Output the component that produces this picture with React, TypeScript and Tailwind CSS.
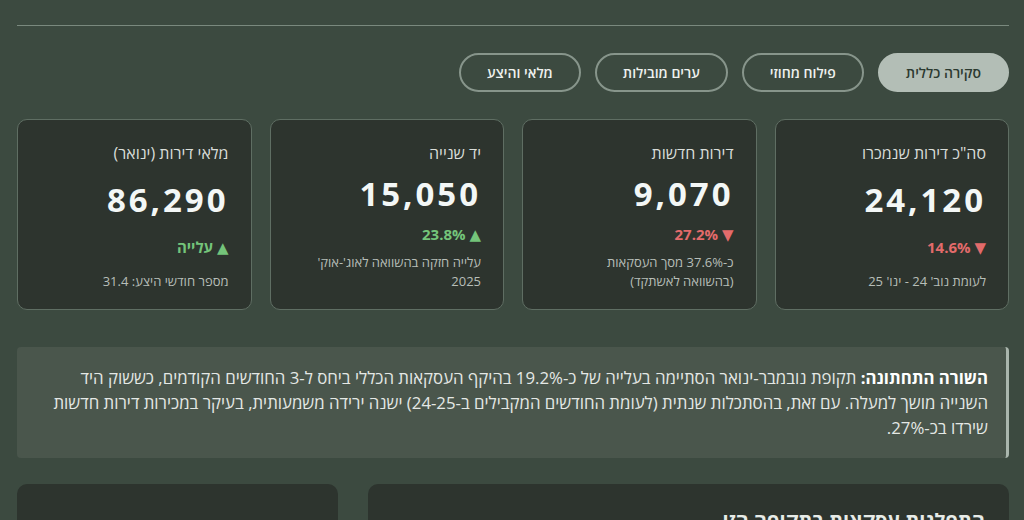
import React from "react";

type Stat = {
  title: string;
  value: string;
  change: string;
  up: boolean;
  note: string[];
};

const STATS: Stat[] = [
  { title: 'סה"כ דירות שנמכרו', value: "24,120", change: "▼ 14.6%", up: false, note: ["לעומת נוב' 24 - ינו' 25"] },
  { title: "דירות חדשות", value: "9,070", change: "▼ 27.2%", up: false, note: ["כ-37.6% מסך העסקאות", "(בהשוואה לאשתקד)"] },
  { title: "יד שנייה", value: "15,050", change: "▲ 23.8%", up: true, note: ["עלייה חזקה בהשוואה לאוג'-אוק'", "2025"] },
  { title: "מלאי דירות (ינואר)", value: "86,290", change: "▲ עלייה", up: true, note: ["מספר חודשי היצע: 31.4"] },
];

const TABS = ["סקירה כללית", "פילוח מחוזי", "ערים מובילות", "מלאי והיצע"];

function StatCard({ s }: { s: Stat }) {
  return (
    <div className="flex flex-col justify-between rounded-[10px] border border-[#5f6e63] bg-[#2d342e] px-[22px] pt-[21px] pb-[18px]">
      <div className="text-[16px] leading-6 text-[#d9ddd9]">{s.title}</div>
      <div className="mt-[9px] text-[33px] font-bold leading-10 tracking-[0.09em] text-[#f3f7f6]">{s.value}</div>
      <div className={`mt-[10px] text-[15px] font-bold leading-5 ${s.up ? "text-[#74c47a]" : "text-[#e36b6b]"}`}>
        {s.change}
      </div>
      <div className="mt-[9px] text-[13px] leading-[19px] text-[#b7beb8]">
        {s.note.map((n) => (
          <div key={n}>{n}</div>
        ))}
      </div>
    </div>
  );
}

export default function App() {
  return (
    <div
      dir="rtl"
      className="h-[520px] overflow-hidden bg-[#3c4a40] pt-[25px] pr-[15px] pl-[17px] text-white"
      style={{ fontFamily: '"Open Sans", "DejaVu Sans", sans-serif' }}
    >
      <div className="h-px bg-[#7a897e]" />

      <div className="mt-[27px] flex gap-[14px]">
        {TABS.map((t, i) => (
          <button
            key={t}
            className={
              i === 0
                ? "h-[39px] rounded-full border-2 border-[#b3beb6] bg-[#b3beb6] px-[26px] text-[14px] font-semibold text-[#2c3a30]"
                : "h-[39px] rounded-full border-2 border-[#87958b] px-[26px] text-[14px] font-semibold text-[#eef1ee]"
            }
          >
            {t}
          </button>
        ))}
      </div>

      <div className="mt-[27px] grid grid-cols-4 gap-[18px]">
        {STATS.map((s) => (
          <StatCard key={s.title} s={s} />
        ))}
      </div>

      <div className="mt-[37px] rounded-[4px] border-r-[3px] border-[#aab6ad] bg-[#4a564c] py-[18px] pr-[18px] pl-[24px] text-[16.8px] leading-[25px] text-[#e4e8e5]">
        <b className="font-bold text-white">השורה התחתונה:</b> תקופת נובמבר-ינואר הסתיימה בעלייה של כ-19.2% בהיקף העסקאות הכללי ביחס ל-3 החודשים הקודמים, כששוק היד השנייה מושך למעלה. עם זאת, בהסתכלות שנתית (לעומת החודשים המקבילים ב-24-25) ישנה ירידה משמעותית, בעיקר במכירות דירות חדשות שירדו בכ-27%.
      </div>

      <div className="mt-[26px] grid grid-cols-[2fr_1fr] gap-[30px]">
        <div className="h-[80px] rounded-[10px] bg-[#2d342e] px-[24px] pt-[22px]">
          <div className="text-[20px] font-bold text-[#e6ebe7]">התפלגות עסקאות בתקופה הזו</div>
        </div>
        <div className="h-[80px] rounded-[10px] bg-[#2d342e]" />
      </div>
    </div>
  );
}
